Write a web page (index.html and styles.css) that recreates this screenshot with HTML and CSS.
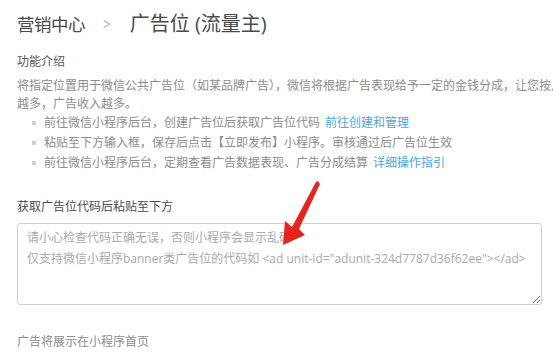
FILE: index.html
```html
<!DOCTYPE html>
<html lang="zh-CN">
<head>
<meta charset="utf-8">
<title>广告位 (流量主)</title>
<link rel="stylesheet" href="styles.css">
</head>
<body>
<div class="page">
  <h1 class="crumbs"><span class="crumb-first">营销中心</span><span class="sep">&gt;</span><span class="crumb-current">广告位 (流量主)</span></h1>
  <div class="section-title">功能介绍</div>
  <p class="intro">将指定位置用于微信公共广告位（如某品牌广告），微信将根据广告表现给予一定的金钱分成，让您按月获得收入，流量<br>越多，广告收入越多。</p>
  <ul class="steps">
    <li>前往微信小程序后台，创建广告位后获取广告位代码 <a class="link" href="#">前往创建和管理</a></li>
    <li>粘贴至下方输入框，保存后点击【立即发布】小程序。审核通过后广告位生效</li>
    <li>前往微信小程序后台，定期查看广告数据表现、广告分成结算 <a class="link" href="#">详细操作指引</a></li>
  </ul>
  <div class="field-label">获取广告位代码后粘贴至下方</div>
  <textarea class="code-input" placeholder="请小心检查代码正确无误，否则小程序会显示乱码&#10;仅支持微信小程序banner类广告位的代码如 <ad unit-id=&quot;adunit-324d7787d36f62ee&quot;></ad>"></textarea>
  <div class="note">广告将展示在小程序首页</div>
</div>
<svg class="arrow" width="553" height="352" viewBox="0 0 553 352" aria-hidden="true">
  <polygon points="318,181 320,184 299,229 305,235 283,245 285,221 292,227 316,182" fill="#e8231c"/>
</svg>
</body>
</html>
```
FILE: styles.css
```css
html, body {
  margin: 0;
  padding: 0;
  background: #ffffff;
  overflow: hidden;
}
body {
  font-family: "Open Sans", "Noto Sans CJK SC", sans-serif;
  color: #888888;
  font-size: 12px;
}
.page {
  width: 760px;
  padding: 12px 0 0 17px;
}
.crumbs {
  margin: 0;
  font-weight: normal;
  font-size: 20px;
  line-height: 24px;
  color: #4a4a4a;
  display: flex;
  align-items: center;
}
.crumb-first {
  font-size: 17.5px;
  letter-spacing: -0.5px;
}
.sep {
  color: #b0b0b0;
  font-size: 17px;
  margin: 0 18px 0 17px;
  transform: scaleX(0.8);
}
.section-title {
  margin-top: 17px;
  line-height: 18px;
  color: #555555;
}
.intro {
  margin: 6px 0 0 0;
  line-height: 18px;
  white-space: nowrap;
  color: #8c8c8c;
}
.steps {
  list-style: none;
  margin: 0;
  padding: 0 0 0 15px;
}
.steps li {
  line-height: 20px;
  display: flex;
  align-items: center;
  white-space: nowrap;
  color: #8c8c8c;
}
.steps li::before {
  content: "";
  width: 4px;
  height: 4px;
  background: #d0d0d0;
  margin-right: 8px;
  flex: none;
}
.link {
  color: #4ea6dc;
  text-decoration: none;
  margin-left: 5px;
}
.field-label {
  margin-top: 25px;
  line-height: 18px;
  color: #4a4a4a;
  font-size: 12px;
}
.code-input {
  display: block;
  box-sizing: border-box;
  margin-top: 7px;
  width: 525px;
  height: 82px;
  border: 1px solid #cfcfcf;
  border-radius: 3px;
  padding: 3px 9px;
  font-family: "Open Sans", "Noto Sans CJK SC", sans-serif;
  font-size: 12px;
  line-height: 21px;
  color: #555;
  outline: none;
}
.code-input::placeholder {
  color: #a9a9a9;
}
.note {
  margin-top: 28px;
  line-height: 18px;
  color: #8c8c8c;
}
.arrow {
  position: absolute;
  left: 0;
  top: 0;
  pointer-events: none;
}
```
